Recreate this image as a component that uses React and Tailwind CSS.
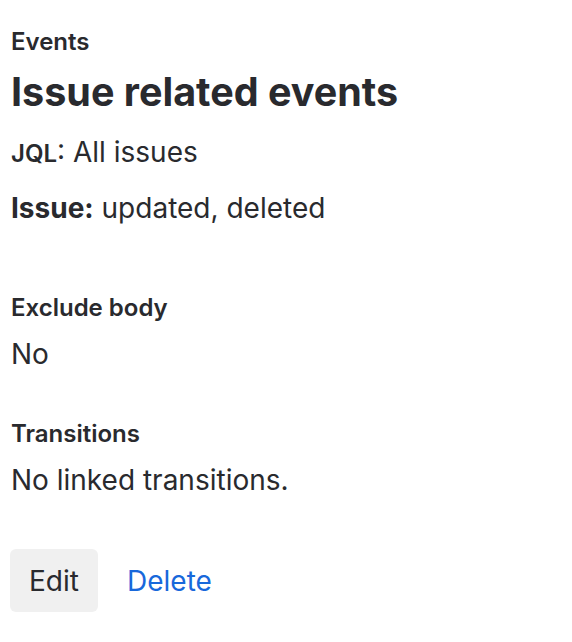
import React from 'react';

function Field({ label, children }) {
    return (
        <div className="flex flex-col">
            <div className="text-[24px] leading-[32px] font-semibold text-[#292a2e]">{label}</div>
            <div className="text-[28px] leading-[40px] text-[#292a2e] mt-[10px]">{children}</div>
        </div>
    );
}

export default function App() {
    return (
        <div className="min-h-screen bg-white px-[11px] pt-[26px] text-[#292a2e]" style={{ fontFamily: 'Inter, "Noto Sans", sans-serif' }}>
            <div className="text-[24px] leading-[32px] font-semibold">Events</div>
            <h1 className="text-[39.5px] leading-[48px] font-bold mt-[10px]">Issue related events</h1>
            <div className="text-[28px] leading-[40px] mt-[16px]">
                <span className="text-[24px] font-semibold">JQL</span>: All issues
            </div>
            <div className="text-[28px] leading-[40px] mt-[14px]">
                <span className="font-bold">Issue:</span> updated, deleted
            </div>
            <div className="flex flex-col gap-[44px] mt-[64px]">
                <Field label="Exclude body">No</Field>
                <Field label="Transitions">No linked transitions.</Field>
            </div>
            <div className="flex items-center gap-[29px] mt-[49px]">
                <button className="h-[63px] w-[88px] -ml-[1px] rounded-[6px] bg-[#f0f0f0] text-[28px] text-[#292a2e]">Edit</button>
                <button className="text-[28px] text-[#1868db]">Delete</button>
            </div>
        </div>
    );
}
